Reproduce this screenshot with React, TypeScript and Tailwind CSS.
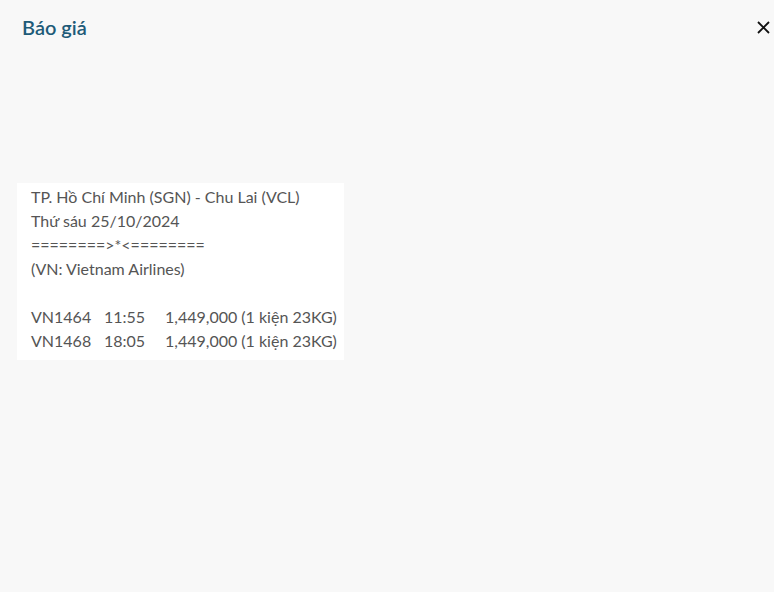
export default function App() {
  return (
    <div className="h-[592px] w-[774px] bg-[#f8f8f8] font-['Lato',sans-serif] relative">
      <div className="flex items-center justify-between pl-[22px] pr-[1px] pt-[15px]">
        <h1 className="text-[20px] font-semibold leading-[24px] text-[#1e5b78]">Báo giá</h1>
        <button className="flex h-[24px] w-[20px] items-center justify-center text-[#111]">
          <svg width="13" height="13" viewBox="0 0 13 13" fill="none" stroke="currentColor" strokeWidth="1.8">
            <path d="M1 1L12 12M12 1L1 12" />
          </svg>
        </button>
      </div>

      <div className="ml-[17px] mt-[144px] w-[327px] bg-white pl-[14px] pt-[2px] pb-[7px] text-[16px] leading-[24px] text-[#555]">
        <div>TP. Hồ Chí Minh (SGN) - Chu Lai (VCL)</div>
        <div>Thứ sáu 25/10/2024</div>
        <div>========&gt;*&lt;========</div>
        <div>(VN: Vietnam Airlines)</div>
        <div className="h-[24px]" />
        <div className="flex">
          <span className="w-[73px]">VN1464</span>
          <span className="w-[61px]">11:55</span>
          <span>1,449,000 (1 kiện 23KG)</span>
        </div>
        <div className="flex">
          <span className="w-[73px]">VN1468</span>
          <span className="w-[61px]">18:05</span>
          <span>1,449,000 (1 kiện 23KG)</span>
        </div>
      </div>
    </div>
  );
}
